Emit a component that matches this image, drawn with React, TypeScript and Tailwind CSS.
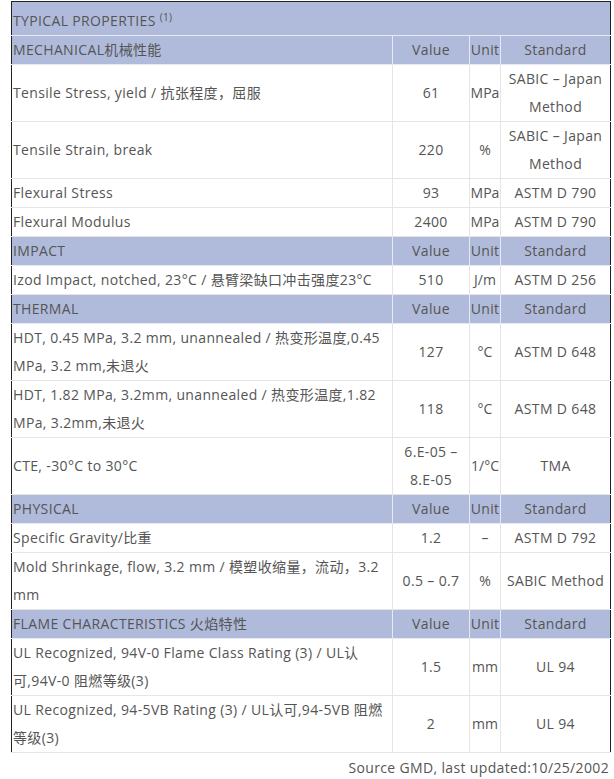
import type { ReactNode } from 'react';

type Row =
  | { kind: 'head'; label: ReactNode }
  | { kind: 'data'; label: ReactNode; value: ReactNode; unit: string; standard: ReactNode; tall?: boolean };

const rows: Row[] = [
  { kind: 'head', label: 'MECHANICAL机械性能' },
  { kind: 'data', label: 'Tensile Stress, yield / 抗张程度，屈服', value: '61', unit: 'MPa', standard: <>SABIC – Japan<br />Method</>, tall: true },
  { kind: 'data', label: 'Tensile Strain, break', value: '220', unit: '%', standard: <>SABIC – Japan<br />Method</>, tall: true },
  { kind: 'data', label: 'Flexural Stress', value: '93', unit: 'MPa', standard: 'ASTM D 790' },
  { kind: 'data', label: 'Flexural Modulus', value: '2400', unit: 'MPa', standard: 'ASTM D 790' },
  { kind: 'head', label: 'IMPACT' },
  { kind: 'data', label: 'Izod Impact, notched, 23°C / 悬臂梁缺口冲击强度23°C', value: '510', unit: 'J/m', standard: 'ASTM D 256' },
  { kind: 'head', label: 'THERMAL' },
  { kind: 'data', label: <>HDT, 0.45 MPa, 3.2 mm, unannealed / 热变形温度,0.45<br />MPa, 3.2 mm,未退火</>, value: '127', unit: '°C', standard: 'ASTM D 648', tall: true },
  { kind: 'data', label: <>HDT, 1.82 MPa, 3.2mm, unannealed / 热变形温度,1.82<br />MPa, 3.2mm,未退火</>, value: '118', unit: '°C', standard: 'ASTM D 648', tall: true },
  { kind: 'data', label: 'CTE, -30°C to 30°C', value: <>6.E-05 –<br />8.E-05</>, unit: '1/°C', standard: 'TMA', tall: true },
  { kind: 'head', label: 'PHYSICAL' },
  { kind: 'data', label: 'Specific Gravity/比重', value: '1.2', unit: '–', standard: 'ASTM D 792' },
  { kind: 'data', label: <>Mold Shrinkage, flow, 3.2 mm / 模塑收缩量，流动，3.2<br />mm</>, value: '0.5 – 0.7', unit: '%', standard: 'SABIC Method', tall: true },
  { kind: 'head', label: 'FLAME CHARACTERISTICS 火焰特性' },
  { kind: 'data', label: <>UL Recognized, 94V-0 Flame Class Rating (3) / UL认<br />可,94V-0 阻燃等级(3)</>, value: '1.5', unit: 'mm', standard: 'UL 94', tall: true },
  { kind: 'data', label: <>UL Recognized, 94-5VB Rating (3) / UL认可,94-5VB 阻燃<br />等级(3)</>, value: '2', unit: 'mm', standard: 'UL 94', tall: true },
];

export default function App() {
  return (
    <div
      className="w-[614px] min-h-[779px] bg-white pl-[11px] pr-[5px] pt-[1px] text-[14px] leading-[28px] tracking-[0.35px] text-[#555]"
      style={{ fontFamily: '"Open Sans", "Noto Sans CJK SC", sans-serif' }}
    >
      <table className="w-[599px] table-fixed border-collapse border border-[#222]">
        <colgroup>
          <col className="w-[381px]" />
          <col className="w-[77px]" />
          <col className="w-[31px]" />
          <col className="w-[110px]" />
        </colgroup>
        <tbody>
          <tr className="bg-[#b0bbdb]">
            <td colSpan={4} className="h-[34px] px-[1px] pt-[4px] align-middle border-b border-[#e6e9f3]">
              TYPICAL PROPERTIES <sup className="text-[10px]">(1)</sup>
            </td>
          </tr>
          {rows.map((row, i) =>
            row.kind === 'head' ? (
              <tr key={i} className="bg-[#b0bbdb]">
                <td className="h-[29px] px-[1px] border-b border-r border-[#e6e9f3]">{row.label}</td>
                <td className="text-center border-b border-r border-[#e6e9f3]">Value</td>
                <td className="text-center border-b border-r border-[#e6e9f3] tracking-[0.3px]">Unit</td>
                <td className="text-center border-b border-[#e6e9f3]">Standard</td>
              </tr>
            ) : (
              <tr key={i} className="bg-white">
                <td className={`${row.tall ? 'h-[57px]' : 'h-[29px]'} px-[1px] border-b border-r border-[#e5e5e5] align-middle`}>{row.label}</td>
                <td className="text-center border-b border-r border-[#e5e5e5]">{row.value}</td>
                <td className="text-center border-b border-r border-[#e5e5e5] whitespace-nowrap tracking-normal">{row.unit}</td>
                <td className="text-center border-b border-[#e5e5e5]">{row.standard}</td>
              </tr>
            )
          )}
        </tbody>
      </table>
      <div className="text-right leading-[30px]">Source GMD, last updated:10/25/2002</div>
    </div>
  );
}
